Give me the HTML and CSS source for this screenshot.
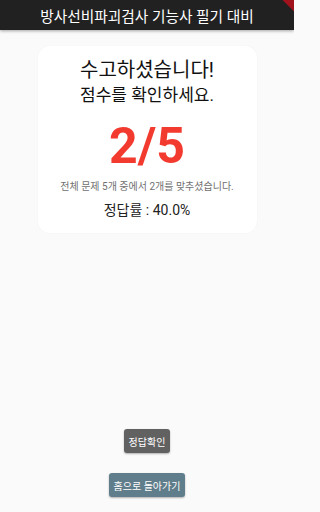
FILE: index.html
```html
<!DOCTYPE html>
<html lang="ko">
<head>
<meta charset="utf-8">
<link rel="stylesheet" href="styles.css">
</head>
<body>
<div class="app">
  <header class="appbar">
    <h1 class="title">방사선비파괴검사 기능사 필기 대비</h1>
    <div class="banner"></div>
  </header>
  <main class="content">
    <section class="card">
      <p class="line1">수고하셨습니다!</p>
      <p class="line2">점수를 확인하세요.</p>
      <p class="score">2/5</p>
      <p class="summary">전체 문제 5개 중에서 2개를 맞추셨습니다.</p>
      <p class="rate">정답률 : 40.0%</p>
    </section>
    <div class="actions">
      <button class="btn btn-check">정답확인</button>
      <button class="btn btn-home">홈으로 돌아가기</button>
    </div>
  </main>
</div>
</body>
</html>
```
FILE: styles.css
```css
* { box-sizing: border-box; }
html, body { margin: 0; padding: 0; }
body {
  background: #fafafa;
  font-family: Roboto, "Noto Sans CJK KR", sans-serif;
  width: 294px;
  height: 512px;
  overflow: hidden;
}
.app {
  height: 512px;
  display: flex;
  flex-direction: column;
}
.appbar {
  position: relative;
  height: 30px;
  background: #212121;
  display: flex;
  align-items: center;
  justify-content: center;
  box-shadow: 0 1px 3px rgba(0,0,0,0.35);
  overflow: hidden;
  z-index: 2;
}
.title {
  margin: 0;
  color: #fff;
  font-weight: 400;
  font-size: 14.7px;
  letter-spacing: 0;
}
.banner {
  position: absolute;
  top: -6px;
  right: -22px;
  width: 50px;
  height: 12px;
  background: #a0131c;
  transform: rotate(45deg);
}
.content {
  flex: 1;
  display: flex;
  flex-direction: column;
  align-items: center;
  padding: 16px 0 15px;
}
.card {
  width: 219px;
  background: #fff;
  border-radius: 12px;
  padding: 11px 0 13px;
  display: flex;
  flex-direction: column;
  align-items: center;
  box-shadow: 0 0 2px rgba(0,0,0,0.04);
}
.card p { margin: 0; }
.line1 {
  font-size: 20px;
  line-height: 26px;
  color: #111;
}
.line2 {
  font-size: 17px;
  line-height: 24px;
  font-weight: 400;
  color: #111;
}
.score {
  margin-top: 11px !important;
  font-size: 50px;
  line-height: 56px;
  font-weight: 700;
  color: #f23a2f;
}
.summary {
  margin-top: 6px !important;
  font-size: 10px;
  line-height: 14px;
  color: #707070;
}
.rate {
  margin-top: 6px !important;
  font-size: 14px;
  line-height: 20px;
  color: #222;
}
.actions {
  margin-top: auto;
  display: flex;
  flex-direction: column;
  align-items: center;
  gap: 20px;
}
.btn {
  height: 24px;
  border: none;
  border-radius: 3px;
  color: #fff;
  font-family: Roboto, "Noto Sans CJK KR", sans-serif;
  font-size: 10px;
  padding: 0 5px;
  box-shadow: 0 1px 2px rgba(0,0,0,0.3);
}
.btn-check { background: #616161; }
.btn-home { background: #5f7d8a; }
```
